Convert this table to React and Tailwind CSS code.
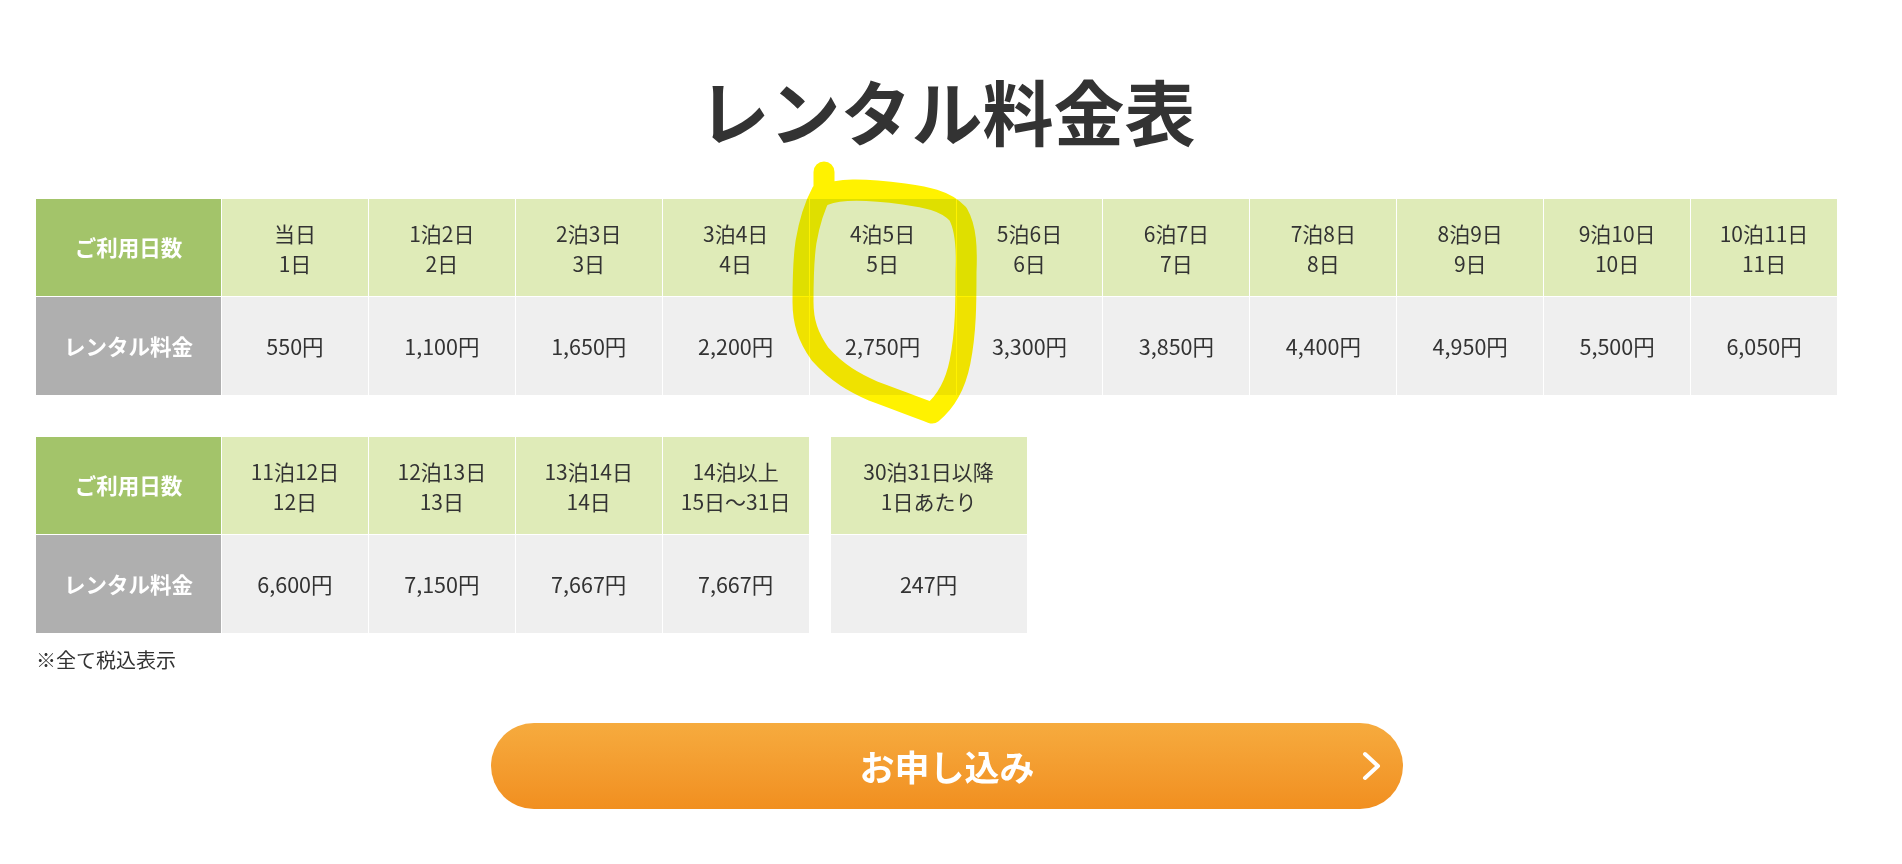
import React from "react";

const row1 = [
  ["当日", "1日", "550円"],
  ["1泊2日", "2日", "1,100円"],
  ["2泊3日", "3日", "1,650円"],
  ["3泊4日", "4日", "2,200円"],
  ["4泊5日", "5日", "2,750円"],
  ["5泊6日", "6日", "3,300円"],
  ["6泊7日", "7日", "3,850円"],
  ["7泊8日", "8日", "4,400円"],
  ["8泊9日", "9日", "4,950円"],
  ["9泊10日", "10日", "5,500円"],
  ["10泊11日", "11日", "6,050円"],
];

const row2 = [
  ["11泊12日", "12日", "6,600円"],
  ["12泊13日", "13日", "7,150円"],
  ["13泊14日", "14日", "7,667円"],
  ["14泊以上", "15日～31日", "7,667円"],
];

function Head({ a, b }) {
  return (
    <div className="flex flex-col items-center justify-center bg-[#dfebb8] text-[21px] leading-[30px] text-[#333333]">
      <span>{a}</span>
      <span>{b}</span>
    </div>
  );
}

function Price({ v }) {
  return (
    <div className="flex items-center justify-center bg-[#efefef] text-[21.5px] leading-[30px] text-[#333333]">
      {v}
    </div>
  );
}

function LabelDays() {
  return (
    <div className="flex items-center justify-center bg-[#a3c46a] text-[21.5px] font-bold text-white">
      ご利用日数
    </div>
  );
}

function LabelPrice() {
  return (
    <div className="flex items-center justify-center bg-[#afafaf] text-[21.5px] font-bold text-white">
      レンタル料金
    </div>
  );
}

export default function App() {
  return (
    <div
      className="relative min-h-[864px] w-full bg-white"
      style={{ fontFamily: '"Noto Sans CJK JP", "Noto Sans", sans-serif' }}
    >
      <div className="w-[1837px] pl-[36px]">
        <h1 className="pt-[59px] text-center text-[71px] font-bold leading-[100px] text-[#333333] pl-[21px]">
          レンタル料金表
        </h1>

        <div className="mt-[40px] grid grid-cols-[185px_repeat(11,minmax(0,1fr))] grid-rows-[97px_98px] gap-px bg-white">
          <LabelDays />
          {row1.map((r) => (
            <Head key={r[0]} a={r[0]} b={r[1]} />
          ))}
          <LabelPrice />
          {row1.map((r) => (
            <Price key={r[0]} v={r[2]} />
          ))}
        </div>

        <div className="mt-[42px] flex">
          <div className="grid grid-cols-[185px_repeat(4,145.9px)] grid-rows-[97px_98px] gap-px bg-white">
            <LabelDays />
            {row2.map((r) => (
              <Head key={r[0]} a={r[0]} b={r[1]} />
            ))}
            <LabelPrice />
            {row2.map((r) => (
              <Price key={r[0]} v={r[2]} />
            ))}
          </div>
          <div className="ml-[22px] grid w-[196px] grid-rows-[97px_98px] gap-px bg-white">
            <Head a="30泊31日以降" b="1日あたり" />
            <Price v="247円" />
          </div>
        </div>

        <p className="mt-[12px] text-[20px] leading-[30px] text-[#333333]">※全て税込表示</p>

        <button className="relative mt-[48px] ml-[455px] flex h-[86px] w-[912px] items-center justify-center rounded-full bg-gradient-to-b from-[#f6ab3e] to-[#f18f1f] text-[35px] font-bold text-white">
          お申し込み
          <svg
            className="absolute right-[20px] top-[28px]"
            width="22"
            height="30"
            viewBox="0 0 22 30"
            fill="none"
          >
            <path
              d="M4 3 L17 15 L4 27"
              stroke="white"
              strokeWidth="4"
              strokeLinecap="round"
              strokeLinejoin="round"
            />
          </svg>
        </button>
      </div>

      <svg
        className="pointer-events-none absolute left-0 top-0 mix-blend-multiply"
        width="1902"
        height="864"
        viewBox="0 0 1902 864"
        fill="none"
      >
        <path
          d="M824 172 L824 195 C838 189 860 188 904 194 C925 197 945 200 958 214 C966 228 967 248 966 272 C966 302 966 332 960 362 C956 382 948 400 932 413 C915 407 895 399 873 391 C855 383 838 374 820 354 C808 337 803 322 803 302 C803 282 803 262 806 242 C809 224 814 207 822 192"
          stroke="#fff200"
          strokeWidth="21"
          strokeLinecap="round"
          strokeLinejoin="round"
        />
      </svg>
    </div>
  );
}
